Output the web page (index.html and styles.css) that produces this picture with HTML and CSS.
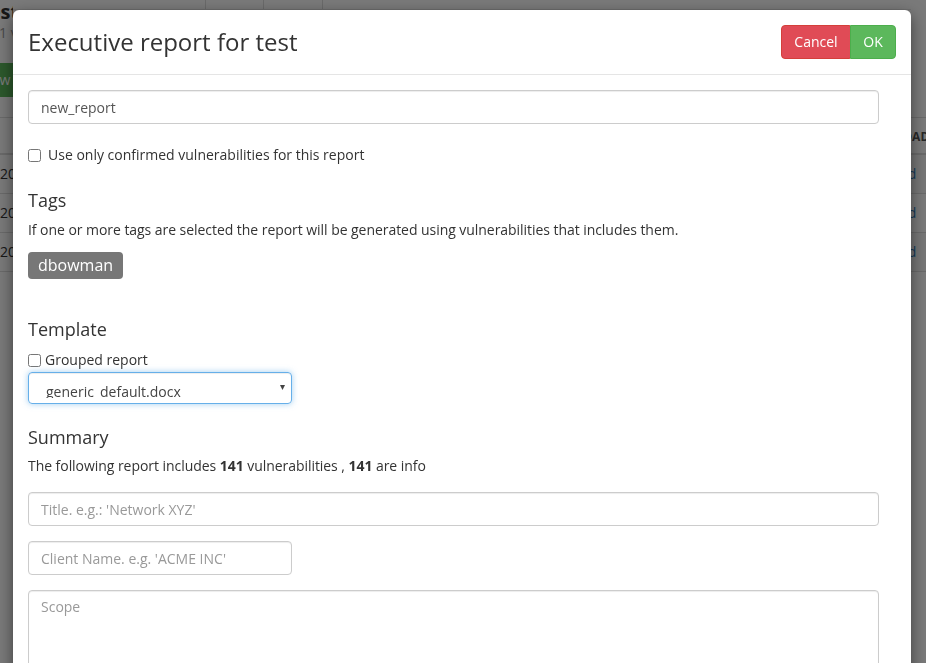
FILE: index.html
```html
<!DOCTYPE html>
<html>
<head>
<meta charset="utf-8">
<title>Executive report</title>
<link rel="stylesheet" href="styles.css">
</head>
<body>
<div class="page">
  <div class="pcol left">
    <div class="ptitle">test</div>
    <div class="psub">141 vulns</div>
    <div class="pbtn">New</div>
    <div class="thead"></div>
    <div class="trow">2017</div>
    <div class="trow">2017</div>
    <div class="trow">2017</div>
  </div>
  <div class="pmid">
    <div class="topbar"><span class="cell c1"></span><span class="cell c2"></span></div>
  </div>
  <div class="pcol right">
    <div class="thead">DOWNLOAD</div>
    <div class="trow"><a>Download</a></div>
    <div class="trow alt"><a>Download</a></div>
    <div class="trow"><a>Download</a></div>
  </div>
</div>
<div class="overlay"></div>
<div class="modal">
  <div class="modal-header">
    <h4 class="modal-title">Executive report for test</h4>
    <div class="btn-group">
      <button class="btn btn-danger">Cancel</button>
      <button class="btn btn-success">OK</button>
    </div>
  </div>
  <div class="modal-body">
    <input class="form-control" type="text" value="new_report">
    <label class="check first"><input type="checkbox"><span>Use only confirmed vulnerabilities for this report</span></label>
    <h5 class="section tags-h">Tags</h5>
    <p class="help">If one or more tags are selected the report will be generated using vulnerabilities that includes them.</p>
    <div class="tags"><span class="tag">dbowman</span></div>
    <h5 class="section tpl-h">Template</h5>
    <label class="check grouped"><input type="checkbox"><span>Grouped report</span></label>
    <div class="select-wrap">
      <div class="select">generic_default.docx</div>
      <span class="caret">&#9662;</span>
    </div>
    <h5 class="section sum-h">Summary</h5>
    <p class="help sum">The following report includes <b>141</b> vulnerabilities , <b>141</b> are info</p>
    <input class="form-control title-in" type="text" placeholder="Title. e.g.: 'Network XYZ'">
    <input class="form-control short client-in" type="text" placeholder="Client Name. e.g. 'ACME INC'">
    <textarea class="form-control scope" placeholder="Scope"></textarea>
  </div>
</div>
</body>
</html>
```
FILE: styles.css
```css
* { box-sizing: border-box; }
html, body { margin: 0; padding: 0; height: 100%; overflow: hidden; }
body {
  font-family: "Open Sans", "Liberation Sans", sans-serif;
  font-size: 14px;
  color: #333;
  background: #fff;
}
.page { height: 663px; display: grid; grid-template-columns: 13px 1fr 15px; }
.pcol { overflow: hidden; white-space: nowrap; }
.topbar { height: 10px; display: flex; border-bottom: 1px solid #e8e8e8; padding-left: 192px; }
.cell { width: 59px; border-left: 1px solid #ddd; border-right: 1px solid #ddd; }
.c2 { border-left: none; }

.ptitle { font-size: 20px; font-weight: 700; color: #333; height: 22px; line-height: 22px; margin-top: 1px; text-indent: -20px; }
.psub { font-size: 14px; color: #999; height: 20px; line-height: 20px; text-indent: -17px; }
.pbtn { margin-top: 20px; height: 34px; line-height: 34px; background: #5cb85c; color: #fff; text-indent: -19px; }
.thead {
  height: 38px;
  border-top: 1px solid #ddd;
  border-bottom: 2px solid #ddd;
}
.left .thead { margin-top: 20px; }
.right .thead {
  margin-top: 117px;
  line-height: 38px;
  font-size: 12px;
  font-weight: 700;
  color: #555;
  text-indent: -55px;
}
.trow { height: 39px; line-height: 38px; border-bottom: 1px solid #ddd; color: #333; font-size: 14px; }
.right .trow { background: #f9f9f9; text-indent: -61px; }
.right .trow.alt { background: #fff; }
.right .trow a { color: #337ab7; }
.overlay { position: fixed; inset: 0; background: rgba(0, 0, 0, 0.52); }

.modal {
  position: absolute;
  left: 13px;
  top: 10px;
  width: 898px;
  height: 720px;
  background: #fff;
  border-radius: 6px;
  box-shadow: 0 5px 15px rgba(0, 0, 0, 0.5);
}
.modal-header {
  display: flex;
  align-items: center;
  justify-content: space-between;
  padding: 15px 15px 15px 15px;
  border-bottom: 1px solid #e5e5e5;
}
.modal-title {
  margin: 0;
  font-size: 24px;
  font-weight: 400;
  line-height: 34px;
  color: #333;
}
.btn-group { display: flex; }
.btn {
  font-family: inherit;
  font-size: 14px;
  height: 34px;
  padding: 0 12px;
  border: 1px solid transparent;
  color: #fff;
  border-radius: 4px;
  line-height: 32px;
}
.btn-danger { background: #e04b56; border-color: #d43f3a; width: 70px; border-top-right-radius: 2px; border-bottom-right-radius: 2px; }
.btn-success { background: #5cb85c; border-color: #4cae4c; border-top-left-radius: 0; border-bottom-left-radius: 0; margin-left: -1px; width: 46px; }

.modal-body { padding: 15px 32px 0 15px; }
.form-control {
  display: block;
  width: 100%;
  height: 34px;
  padding: 6px 12px;
  font-family: inherit;
  font-size: 14px;
  color: #555;
  background: #fff;
  border: 1px solid #ccc;
  border-radius: 4px;
  box-shadow: inset 0 1px 1px rgba(0, 0, 0, .075);
  outline: none;
}
.form-control::placeholder { color: #999; }
.check { display: flex; align-items: center; height: 20px; line-height: 20px; }
.check input { margin: 0; width: 13px; height: 13px; }
.check.first { margin-top: 21px; }
.check.first span { margin-left: 7px; }
.check.grouped { margin-top: 11px; }
.check.grouped span { margin-left: 4px; }
.section { margin: 0; font-size: 18px; font-weight: 400; line-height: 20px; color: #333; }
.tags-h { margin-top: 25px; }
.help { margin: 10px 0 0; line-height: 20px; letter-spacing: -0.05px; }
.tags { margin-top: 12px; display: flex; }
.tag {
  background: #777;
  color: #fff;
  font-size: 16px;
  height: 27px;
  line-height: 27px;
  padding: 0 10px;
  border-radius: 4px;
}
.tpl-h { margin-top: 40px; }
.select-wrap {
  margin-top: 2px;
  position: relative;
  width: 264px;
  height: 32px;
  border: 1px solid #66afe9;
  border-radius: 4px;
  box-shadow: inset 0 1px 1px rgba(0, 0, 0, .075), 0 0 6px rgba(102, 175, 233, .6);
  overflow: hidden;
}
.select { padding: 2px 0 0 17px; line-height: 34px; height: 25px; overflow: hidden; color: #444; font-size: 14px; }
.caret { position: absolute; right: 6px; top: 6px; font-size: 10px; color: #444; }
.sum-h { margin-top: 23px; }
.help.sum { margin-top: 9px; }
.help b { font-weight: 700; }
.title-in { margin-top: 16px; }
.client-in { margin-top: 15px; width: 264px; }
.scope { margin-top: 15px; height: 120px; resize: none; }
```
